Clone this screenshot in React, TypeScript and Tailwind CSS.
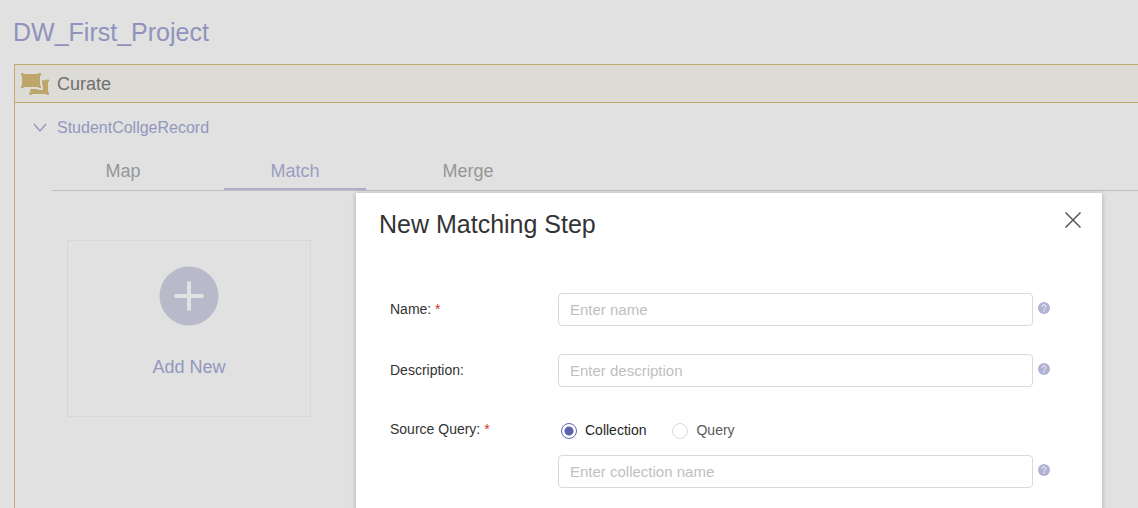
import React, { useState } from "react";

function GroupIcon() {
  return (
    <svg viewBox="0 0 28 22" className="h-[22px] w-7" fill="#bda56b" aria-hidden="true">
      <path d="M0 0h2.6v1h14.8V0H20v2.6h-1v9.8h1V15h-2.6v-1H2.6v1H0v-2.6h1V2.6H0z" />
      <path d="M21 7.2h4.2V6.4H28V9h-1v10.2h1v2.6h-2.8v-.9H11v.9H8.3v-2.6h.9V16h7.6v1h5v-5.2H21z" />
    </svg>
  );
}

function Help({ topic }: { topic: string }) {
  return (
    <button type="button" aria-label={`Help for ${topic}`} className="mb-1 shrink-0">
      <svg viewBox="0 0 12 12" className="size-3" fill="none" aria-hidden="true">
        <circle cx="6" cy="6" r="6" fill="#b1b2d3" />
        <path d="M4.1 4.7c0-2.7 3.8-2.5 3.8-.1 0 1.3-1.8 1.3-1.8 2.8" stroke="#fff" strokeWidth="1" />
        <circle cx="6.1" cy="9" r=".7" fill="#fff" />
      </svg>
    </button>
  );
}

function Label({ htmlFor, text, required }: { htmlFor: string; text: string; required?: boolean }) {
  return (
    <label htmlFor={htmlFor} className="w-42 shrink-0 pb-[2px] text-sm text-[#333333]">
      {text}
      {required && <span className="text-[#d0312d]"> *</span>}
    </label>
  );
}

function TextField({ id, topic, placeholder }: { id: string; topic: string; placeholder: string }) {
  return (
    <div className="flex min-w-0 flex-1 items-center gap-[5px]">
      <input
        id={id}
        aria-label={topic}
        type="text"
        placeholder={placeholder}
        className="h-[33px] min-w-0 flex-1 rounded border border-[#d9d9d9] bg-white px-[11px] text-[15px] text-[#333333] outline-none placeholder:text-[#bfbfbf]"
      />
      <Help topic={topic} />
    </div>
  );
}

function Radio({ id, label, checked, onChange }: { id: string; label: string; checked: boolean; onChange: () => void }) {
  return (
    <label htmlFor={id} className={checked ? "flex items-center gap-2 text-[#262626]" : "flex items-center gap-2 text-[#595959]"}>
      <input
        id={id}
        type="radio"
        name="source"
        checked={checked}
        onChange={onChange}
        className="size-4 appearance-none rounded-full border border-[#d9d9d9] bg-white checked:border-[#5d68b4] checked:bg-[radial-gradient(circle,#5d62ad_4px,white_5px)]"
      />
      {label}
    </label>
  );
}

function NewStepDialog() {
  const [source, setSource] = useState("collection");
  return (
    <div
      role="dialog"
      aria-labelledby="dialog-title"
      className="flex-1 bg-white pr-[52px] pb-16 pl-[34px] shadow-[0_1px_5px_rgba(0,0,0,0.25)]"
    >
      <header className="-mr-8 -ml-[11px] flex items-start justify-between pt-[15px]">
        <h2 id="dialog-title" className="text-[25px] leading-8 text-[#333333]">New Matching Step</h2>
        <button type="button" aria-label="Close" className="mt-1 mr-px text-[#555555]">
          <svg viewBox="0 0 16 16" className="size-4" stroke="currentColor" strokeWidth="1.5" aria-hidden="true">
            <path d="M.5.5l15 15M15.5.5l-15 15" />
          </svg>
        </button>
      </header>
      <form className="mt-[53px] flex flex-col gap-7">
        <div className="flex items-center">
          <Label htmlFor="name" text="Name:" required />
          <TextField id="name" topic="Name" placeholder="Enter name" />
        </div>
        <div className="flex items-center">
          <Label htmlFor="description" text="Description:" />
          <TextField id="description" topic="Description" placeholder="Enter description" />
        </div>
        <div className="flex items-start pt-1">
          <Label htmlFor="collection-name" text="Source Query:" required />
          <div className="flex min-w-0 flex-1 flex-col gap-[13px]">
            <div className="flex items-center gap-[26px] pl-[3px] text-sm leading-[23px]">
              <Radio id="collection" label="Collection" checked={source === "collection"} onChange={() => setSource("collection")} />
              <Radio id="query" label="Query" checked={source === "query"} onChange={() => setSource("query")} />
            </div>
            <TextField id="collection-name" topic="Collection name" placeholder="Enter collection name" />
          </div>
        </div>
      </form>
    </div>
  );
}

export default function App() {
  return (
    <div className="relative flex h-screen flex-col overflow-hidden bg-[#e1e1e1] pl-[14px] font-['Liberation_Sans',Arial,sans-serif]">
      <h1 className="-ml-px pt-4 pb-4 text-[25px] leading-8 text-[#8f93bc]">DW_First_Project</h1>
      <section className="flex-1 border-t border-l border-[#c2aa70]">
        <header className="flex h-[38px] items-center gap-2 border-b border-[#c2aa70] bg-[#dddbd5] pl-[6px]">
          <GroupIcon />
          <h2 className="text-lg text-[#707070]">Curate</h2>
        </header>
        <button type="button" className="mt-[13px] ml-[18px] flex items-center gap-[10px] text-base text-[#9397be]">
          <svg viewBox="0 0 14 10" className="h-[10px] w-[14px]" fill="none" stroke="currentColor" strokeWidth="1.3" aria-hidden="true">
            <path d="M1 1l6 7 6-7" />
          </svg>
          StudentCollgeRecord
        </button>
        <nav className="mt-3 ml-[37px] flex h-[39px] border-b border-[#bebebe] text-lg text-[#969696]">
          <button type="button" className="w-[142px]">Map</button>
          <button type="button" className="ml-[30px] w-[142px] border-b-2 border-[#adafc7] pt-[2px] text-[#9c9ec0]">Match</button>
          <button type="button" className="ml-[31px] w-[142px]">Merge</button>
        </nav>
        <button type="button" className="mt-[49px] ml-[52px] flex h-[177px] w-[244px] flex-col items-center border border-[#d7d7d7] pt-[25px] text-[#9397be]">
          <svg viewBox="0 0 60 60" className="size-[60px]" aria-hidden="true">
            <circle cx="30" cy="30" r="29.5" fill="#b8bac9" />
            <path d="M30 17v26M17 30h26" stroke="#e1e1e1" strokeWidth="4" strokeLinecap="round" />
          </svg>
          <span className="mt-[27px] text-lg">Add New</span>
        </button>
      </section>
      <div className="absolute inset-x-0 top-0 flex pt-[193px] pr-9 pl-[356px]">
        <NewStepDialog />
      </div>
    </div>
  );
}
